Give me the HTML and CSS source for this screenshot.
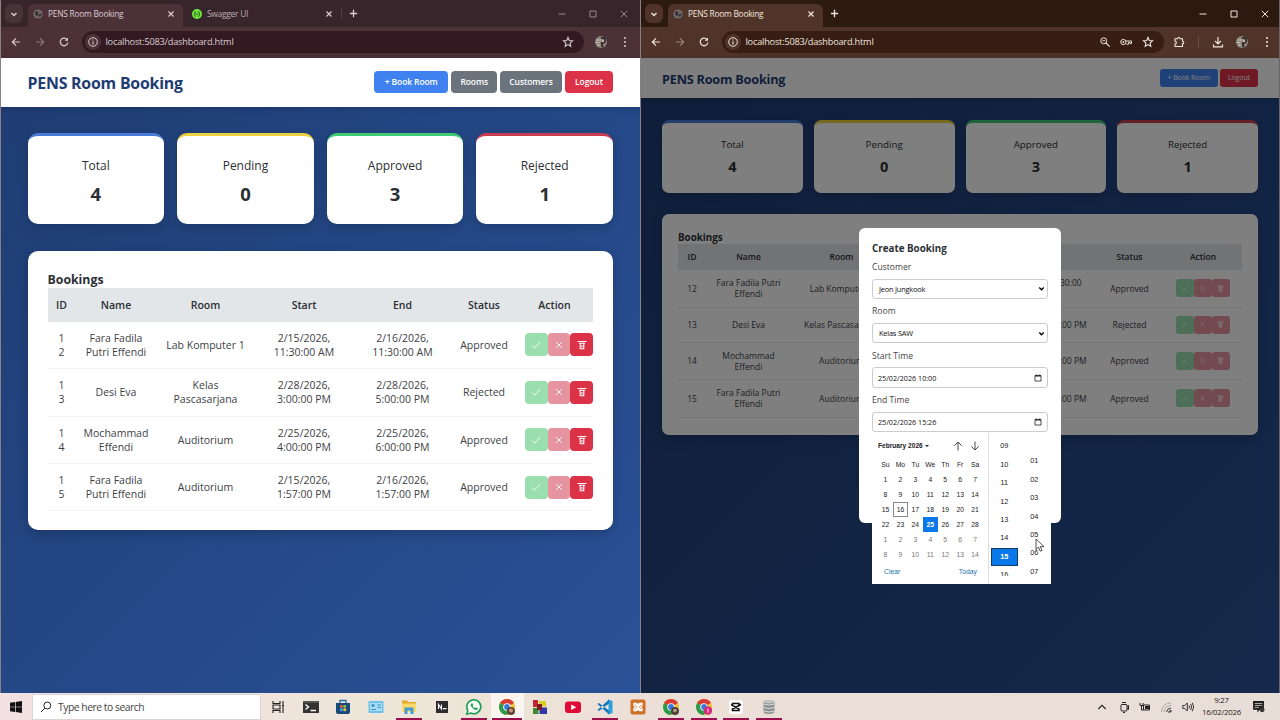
FILE: index.html
```html
<!DOCTYPE html>
<html lang="en">
<head>
<meta charset="UTF-8">
<meta name="viewport" content="width=device-width, initial-scale=1.0">
<title>PENS Room Booking</title>
<link rel="stylesheet" href="styles.css">
</head>
<body>

<!-- shared icons -->
<svg class="sprite" width="0" height="0">
  <symbol id="chevron" viewBox="0 0 10 10"><path d="M2.5 4l2.5 2.5L7.500 4" fill="none" stroke="currentColor" stroke-width="1.5"/></symbol>
  <symbol id="globe" viewBox="0 0 10 10"><circle cx="5" cy="5" r="4.600" fill="#6f6a6d"/><path d="M2 3.500l2-1.500 1.500 1-1 1.500 1 1-1 2-2-2zM6 5l2.500-.5-.5 2-2 1.500z" fill="#332a2e"/></symbol>
  <symbol id="close" viewBox="0 0 10 10"><path d="M2.500 2.500l5 5M7.500 2.500l-5 5" stroke="currentColor" stroke-width="1.2"/></symbol>
  <symbol id="plus" viewBox="0 0 10 10"><path d="M5 1.700v6.600M1.700 5h6.600" stroke="currentColor" stroke-width="1.200"/></symbol>
  <symbol id="back" viewBox="0 0 12 12"><path d="M10 6H2.500M6 2.300L2.300 6 6 9.700" fill="none" stroke="currentColor" stroke-width="1.200"/></symbol>
  <symbol id="forward" viewBox="0 0 12 12"><path d="M2 6h7.500M6 2.300L9.700 6 6 9.700" fill="none" stroke="currentColor" stroke-width="1.200"/></symbol>
  <symbol id="reload" viewBox="0 0 12 12"><path d="M9.300 4A3.800 3.800 0 1 0 9.800 6.500" fill="none" stroke="currentColor" stroke-width="1.200"/><path d="M10 1.500v3.300H6.700z" fill="currentColor"/></symbol>
  <symbol id="info" viewBox="0 0 12 12"><circle cx="6" cy="6" r="4.300" fill="none" stroke="currentColor"/><path d="M6 5.400v3M6 3.500v1.100" stroke="currentColor" stroke-width="1.100"/></symbol>
  <symbol id="star" viewBox="0 0 12 12"><path d="M6 1.500l1.300 3 3.200.3L8.100 7l.7 3.300L6 8.600 3.200 10.300 3.900 7 1.500 4.800l3.200-.3z" fill="none" stroke="currentColor" stroke-width="1.100"/></symbol>
  <symbol id="dots" viewBox="0 0 12 12"><g fill="currentColor"><circle cx="6" cy="1.900" r="1"/><circle cx="6" cy="6" r="1"/><circle cx="6" cy="10.100" r="1"/></g></symbol>
  <symbol id="avatar" viewBox="0 0 12 12"><circle cx="6" cy="6" r="6" fill="#8d857c"/><path d="M1 4h5M.5 6.500h4M2 9h4" stroke="#c9c2b4" stroke-width="1"/><path d="M6 2q4-1 4 2t-3 3q-1 2 1 4" fill="none" stroke="#332b29" stroke-width="2"/><circle cx="8" cy="5" r="1.200" fill="#cfb9a4"/></symbol>
  <symbol id="min" viewBox="0 0 10 10"><path d="M1.500 5h7" stroke="currentColor"/></symbol>
  <symbol id="max" viewBox="0 0 10 10"><path d="M2 2h6v6H2z" fill="none" stroke="currentColor"/></symbol>
  <symbol id="quit" viewBox="0 0 10 10"><path d="M1.800 1.800l6.400 6.400M8.200 1.800L1.800 8.200" stroke="currentColor"/></symbol>
  <symbol id="check" viewBox="0 0 10 10"><path d="M1 5.500l2.600 2.600L9 2.200" fill="none" stroke="currentColor" stroke-width=".9"/></symbol>
  <symbol id="cross" viewBox="0 0 10 10"><path d="M2 2l6 6M8 2L2 8" stroke="currentColor" stroke-width=".9"/></symbol>
  <symbol id="trash" viewBox="0 0 10 10"><path d="M.5 1.500h9M2 3.300h6M3.200 3.500v5.300h3.600V3.500M5 5v2.500" fill="none" stroke="currentColor" stroke-width="1.100"/></symbol>
  <symbol id="date" viewBox="0 0 8 8"><path d="M1 1.500h6V7H1z" fill="none" stroke="#222" stroke-width=".8"/><path d="M1 2h6M2.300.5v1M5.700.5v1" stroke="#222" stroke-width="1.100"/></symbol>
  <symbol id="chrome" viewBox="0 0 16 16"><circle cx="8" cy="8" r="8" fill="#f2c230"/><path d="M8 8L1.100 4A8 8 0 0 1 14.900 4z" fill="#d93a31"/><path d="M8 8L1.100 4A8 8 0 0 0 8 16l3.300-6z" fill="#2c9a4b"/><circle cx="8" cy="8" r="3.800" fill="#fff"/><circle cx="8" cy="8" r="2.900" fill="#3b78dc"/></symbol>
</svg>

<div class="desktop">
  <div class="windows">

    <!-- left browser -->
    <section class="browser browser-left">
      <div class="tabstrip">
        <span class="tab-menu"><svg><use href="#chevron"/></svg></span>
        <div class="tab active">
          <svg class="favicon"><use href="#globe"/></svg>
          <span class="tab-title">PENS Room Booking</span>
          <svg class="tab-close"><use href="#close"/></svg>
        </div>
        <div class="tab">
          <svg class="favicon" viewBox="0 0 10 10"><circle cx="5" cy="5" r="5" fill="#6ee63c"/><path d="M3.800 2.500q-1 0-1 1.200T2 5q.8.200.8 1.300t1 1.200M6.200 2.500q1 0 1 1.200T8 5q-.8.200-.8 1.300t-1 1.200M3.700 5h2.600" fill="none" stroke="#1d4a16" stroke-width=".9"/></svg>
          <span class="tab-title">Swagger UI</span>
          <svg class="tab-close"><use href="#close"/></svg>
        </div>
        <span class="tab-sep"></span>
        <svg class="new-tab"><use href="#plus"/></svg>
        <div class="controls">
          <svg><use href="#min"/></svg>
          <svg><use href="#max"/></svg>
          <svg><use href="#quit"/></svg>
        </div>
      </div>
      <div class="toolbar">
        <svg><use href="#back"/></svg>
        <svg class="dim"><use href="#forward"/></svg>
        <svg><use href="#reload"/></svg>
        <div class="urlbar">
          <span class="site-info"><svg><use href="#info"/></svg></span>
          <span class="url">localhost:5083/dashboard.html</span>
          <div class="url-icons"><svg><use href="#star"/></svg></div>
        </div>
        <div class="extras">
          <svg><use href="#avatar"/></svg>
          <svg><use href="#dots"/></svg>
        </div>
      </div>

      <main class="page">
        <header class="header">
          <h1>PENS Room Booking</h1>
          <nav>
            <span class="btn blue">+ Book Room</span>
            <span class="btn gray">Rooms</span>
            <span class="btn gray">Customers</span>
            <span class="btn red">Logout</span>
          </nav>
        </header>
        <div class="stats">
          <div class="stat total"><p>Total</p><b>4</b></div>
          <div class="stat pending"><p>Pending</p><b>0</b></div>
          <div class="stat approved"><p>Approved</p><b>3</b></div>
          <div class="stat rejected"><p>Rejected</p><b>1</b></div>
        </div>
        <div class="bookings">
          <h2>Bookings</h2>
          <table>
            <colgroup><col class="c-id"><col class="c-name"><col class="c-room"><col class="c-start"><col class="c-end"><col class="c-status"><col class="c-action"></colgroup>
            <thead>
              <tr><th>ID</th><th>Name</th><th>Room</th><th>Start</th><th>End</th><th>Status</th><th>Action</th></tr>
            </thead>
            <tbody>
              <tr>
                <td>1<br>2</td><td>Fara Fadila<br>Putri Effendi</td><td>Lab Komputer 1</td><td>2/15/2026,<br>11:30:00 AM</td><td>2/16/2026,<br>11:30:00 AM</td><td>Approved</td>
                <td><div class="actions"><span class="ok"><svg><use href="#check"/></svg></span><span class="no"><svg><use href="#cross"/></svg></span><span class="del"><svg><use href="#trash"/></svg></span></div></td>
              </tr>
              <tr>
                <td>1<br>3</td><td>Desi Eva</td><td>Kelas<br>Pascasarjana</td><td>2/28/2026,<br>3:00:00 PM</td><td>2/28/2026,<br>5:00:00 PM</td><td>Rejected</td>
                <td><div class="actions"><span class="ok"><svg><use href="#check"/></svg></span><span class="no"><svg><use href="#cross"/></svg></span><span class="del"><svg><use href="#trash"/></svg></span></div></td>
              </tr>
              <tr>
                <td>1<br>4</td><td>Mochammad<br>Effendi</td><td>Auditorium</td><td>2/25/2026,<br>4:00:00 PM</td><td>2/25/2026,<br>6:00:00 PM</td><td>Approved</td>
                <td><div class="actions"><span class="ok"><svg><use href="#check"/></svg></span><span class="no"><svg><use href="#cross"/></svg></span><span class="del"><svg><use href="#trash"/></svg></span></div></td>
              </tr>
              <tr>
                <td>1<br>5</td><td>Fara Fadila<br>Putri Effendi</td><td>Auditorium</td><td>2/15/2026,<br>1:57:00 PM</td><td>2/16/2026,<br>1:57:00 PM</td><td>Approved</td>
                <td><div class="actions"><span class="ok"><svg><use href="#check"/></svg></span><span class="no"><svg><use href="#cross"/></svg></span><span class="del"><svg><use href="#trash"/></svg></span></div></td>
              </tr>
            </tbody>
          </table>
        </div>
      </main>
    </section>

    <!-- right browser -->
    <section class="browser browser-right">
      <div class="tabstrip">
        <span class="tab-menu"><svg><use href="#chevron"/></svg></span>
        <div class="tab active">
          <svg class="favicon"><use href="#globe"/></svg>
          <span class="tab-title">PENS Room Booking</span>
          <svg class="tab-close"><use href="#close"/></svg>
        </div>
        <svg class="new-tab"><use href="#plus"/></svg>
        <div class="controls">
          <svg><use href="#min"/></svg>
          <svg><use href="#max"/></svg>
          <svg><use href="#quit"/></svg>
        </div>
      </div>
      <div class="toolbar">
        <svg><use href="#back"/></svg>
        <svg class="dim"><use href="#forward"/></svg>
        <svg><use href="#reload"/></svg>
        <div class="urlbar">
          <span class="site-info"><svg><use href="#info"/></svg></span>
          <span class="url">localhost:5083/dashboard.html</span>
          <div class="url-icons">
            <svg viewBox="0 0 12 12"><circle cx="4.800" cy="4.800" r="3" fill="none" stroke="currentColor"/><path d="M7 7l3.700 3.700M3.500 4.800h2.600" stroke="currentColor" stroke-width="1.100"/></svg>
            <svg viewBox="0 0 12 12"><circle cx="3.300" cy="6" r="2.600" fill="none" stroke="currentColor"/><circle cx="3.300" cy="6" r=".9" fill="currentColor"/><path d="M6 5h5.500v2.500H10V6.500H8.500v1.700H6.300" fill="none" stroke="currentColor"/></svg>
            <svg><use href="#star"/></svg>
          </div>
        </div>
        <div class="extras">
          <svg viewBox="0 0 12 12"><path d="M2 2.800h2.500a1.300 1.300 0 0 1 2.600 0h2.400v2.500a1.300 1.300 0 0 1 0 2.600v2.600H2V8a1.300 1.300 0 0 0 0-2.700z" fill="none" stroke="currentColor" stroke-width="1.100"/></svg>
          <span class="extras-sep"></span>
          <svg viewBox="0 0 12 12"><path d="M6 1v6.500M3 4.800l3 3 3-3M1.500 8.500v2.300h9V8.500" fill="none" stroke="currentColor" stroke-width="1.200"/></svg>
          <svg><use href="#avatar"/></svg>
          <svg><use href="#dots"/></svg>
        </div>
      </div>

      <main class="page">
        <header class="header">
          <h1>PENS Room Booking</h1>
          <nav>
            <span class="btn blue">+ Book Room</span>
            <span class="btn red">Logout</span>
          </nav>
        </header>
        <div class="stats">
          <div class="stat total"><p>Total</p><b>4</b></div>
          <div class="stat pending"><p>Pending</p><b>0</b></div>
          <div class="stat approved"><p>Approved</p><b>3</b></div>
          <div class="stat rejected"><p>Rejected</p><b>1</b></div>
        </div>
        <div class="bookings">
          <h2>Bookings</h2>
          <table>
            <colgroup><col class="c-id"><col class="c-name"><col class="c-room"><col class="c-start"><col class="c-end"><col class="c-status"><col class="c-action"></colgroup>
            <thead>
              <tr><th>ID</th><th>Name</th><th>Room</th><th></th><th></th><th>Status</th><th>Action</th></tr>
            </thead>
            <tbody>
              <tr>
                <td>12</td><td>Fara Fadila Putri<br>Effendi</td><td>Lab Komputer 1</td><td></td><td>2/16/2026, 11:30:00<br>AM</td><td>Approved</td>
                <td><div class="actions"><span class="ok"><svg><use href="#check"/></svg></span><span class="no"><svg><use href="#cross"/></svg></span><span class="del"><svg><use href="#trash"/></svg></span></div></td>
              </tr>
              <tr class="short">
                <td>13</td><td>Desi Eva</td><td>Kelas Pascasarjana</td><td></td><td>2/28/2026, 5:00:00 PM</td><td>Rejected</td>
                <td><div class="actions"><span class="ok"><svg><use href="#check"/></svg></span><span class="no"><svg><use href="#cross"/></svg></span><span class="del"><svg><use href="#trash"/></svg></span></div></td>
              </tr>
              <tr>
                <td>14</td><td>Mochammad<br>Effendi</td><td>Auditorium</td><td></td><td>2/25/2026, 6:00:00 PM</td><td>Approved</td>
                <td><div class="actions"><span class="ok"><svg><use href="#check"/></svg></span><span class="no"><svg><use href="#cross"/></svg></span><span class="del"><svg><use href="#trash"/></svg></span></div></td>
              </tr>
              <tr>
                <td>15</td><td>Fara Fadila Putri<br>Effendi</td><td>Auditorium</td><td></td><td>2/16/2026, 1:57:00 PM</td><td>Approved</td>
                <td><div class="actions"><span class="ok"><svg><use href="#check"/></svg></span><span class="no"><svg><use href="#cross"/></svg></span><span class="del"><svg><use href="#trash"/></svg></span></div></td>
              </tr>
            </tbody>
          </table>
        </div>

        <div class="overlay"></div>
        <div class="modal">
          <h3>Create Booking</h3>
          <label>Customer</label>
          <div class="field select"><span>Jeon Jungkook</span><svg><use href="#chevron"/></svg></div>
          <label>Room</label>
          <div class="field select"><span>Kelas SAW</span><svg><use href="#chevron"/></svg></div>
          <label>Start Time</label>
          <div class="field"><span>25/02/2026 10:00</span><svg><use href="#date"/></svg></div>
          <label>End Time</label>
          <div class="field"><span>25/02/2026 15:26</span><svg><use href="#date"/></svg></div>

          <div class="picker">
            <div class="calendar">
              <div class="cal-head">
                <b>February 2026</b><i class="caret"></i>
                <svg viewBox="0 0 10 10"><path d="M5 9.500V1M1.300 4.700L5 1l3.700 3.700" fill="none" stroke="#333" stroke-width=".9"/></svg>
                <svg viewBox="0 0 10 10"><path d="M5 .5V9M1.300 5.300L5 9l3.700-3.700" fill="none" stroke="#333" stroke-width=".9"/></svg>
              </div>
              <div class="days">
                <span>Su</span><span>Mo</span><span>Tu</span><span>We</span><span>Th</span><span>Fr</span><span>Sa</span>
                <span>1</span><span>2</span><span>3</span><span>4</span><span>5</span><span>6</span><span>7</span>
                <span>8</span><span>9</span><span>10</span><span>11</span><span>12</span><span>13</span><span>14</span>
                <span>15</span><span class="today">16</span><span>17</span><span>18</span><span>19</span><span>20</span><span>21</span>
                <span>22</span><span>23</span><span>24</span><span class="selected">25</span><span>26</span><span>27</span><span>28</span>
                <span class="next">1</span><span class="next">2</span><span class="next">3</span><span class="next">4</span><span class="next">5</span><span class="next">6</span><span class="next">7</span>
                <span class="next">8</span><span class="next">9</span><span class="next">10</span><span class="next">11</span><span class="next">12</span><span class="next">13</span><span class="next">14</span>
              </div>
              <div class="cal-foot"><span>Clear</span><span>Today</span></div>
            </div>
            <div class="times hours">
              <span>09</span><span>10</span><span>11</span><span>12</span><span>13</span><span>14</span><span class="selected">15</span><span>16</span>
            </div>
            <div class="times minutes">
              <span>01</span><span>02</span><span>03</span><span>04</span><span>05</span><span>06</span><span>07</span>
            </div>
          </div>
          <svg class="cursor" viewBox="0 0 10 15"><path d="M1 1v10.500l2.500-2.300 1.700 4 1.800-.8-1.700-3.800H9z" fill="#fff" stroke="#222" stroke-width=".8"/></svg>
        </div>
      </main>
    </section>
  </div>

  <!-- taskbar -->
  <footer class="taskbar">
    <span class="start"><svg viewBox="0 0 12 12"><path d="M0 1.700l5-.7v4.700H0zM5.700.9L12 0v5.700H5.700zM0 6.300h5V11l-5-.7zM5.700 6.300H12V12l-6.300-.9z" fill="#111"/></svg></span>
    <div class="search">
      <svg viewBox="0 0 12 12"><circle cx="7.300" cy="4.500" r="3.500" fill="none" stroke="#222"/><path d="M4.800 7.200L1 11" stroke="#222"/></svg>
      <span>Type here to search</span>
    </div>
    <div class="apps">
      <span><svg viewBox="0 0 16 16"><path d="M3 2v2.500h7V2M3 14v-2.500h7V14M3 6h7v4H3zM13 2v3M13 8v6" fill="none" stroke="#222" stroke-width="1.100"/><path d="M12 5.500h2v2h-2z" fill="#222"/></svg></span>
      <span><svg viewBox="0 0 16 16"><path d="M0 2h16v12H0z" fill="#333"/><path d="M0 2h16v2H0z" fill="#555"/><path d="M2.500 5.500L5.500 8l-3 2.500M7.500 11.500H13" fill="none" stroke="#fff" stroke-width="1.400"/></svg></span>
      <span><svg viewBox="0 0 16 16"><path d="M5 4V1.500h6V4" fill="none" stroke="#1a6fae" stroke-width="1.300"/><path d="M1 4h14v9q0 2-2 2H3q-2 0-2-2z" fill="#174a7c"/><path d="M5 6h2.700v2.700H5z" fill="#e85b39"/><path d="M8.400 6h2.700v2.700H8.400z" fill="#83c341"/><path d="M5 9.400h2.700v2.700H5z" fill="#39a5e8"/><path d="M8.400 9.400h2.700v2.700H8.400z" fill="#fbc22d"/></svg></span>
      <span><svg viewBox="0 0 16 16"><rect x=".5" y="2" width="15" height="12" rx="1" fill="#6cc1e8"/><path d="M2 4h12v8H2z" fill="#a6def5"/><circle cx="5" cy="6.500" r="1.600" fill="#3d8fc4"/><path d="M3 10.500h5M9.500 6H13M9.500 8.500H13" stroke="#3d8fc4"/></svg></span>
      <span class="open"><svg viewBox="0 0 16 16"><path d="M1 1.500h5l1 1.500h8v10H1z" fill="#e2a92b"/><path d="M1 4.500h14V13H1z" fill="#fbd968"/><path d="M3.500 15V8.500h9V15h-3v-3.500h-3V15z" fill="#3f9bd4"/></svg></span>
      <span><svg viewBox="0 0 16 16"><path d="M2 2h12v12H2z" fill="#2b2b2d"/><path d="M4.500 10V5.500l3 4.500V5.500M9 9.700h3.500" fill="none" stroke="#fff" stroke-width="1.200"/></svg></span>
      <span class="open"><svg viewBox="0 0 16 16"><path d="M.8 15.200l1-3.800A7 7 0 1 1 4.600 14z" fill="#f5fff5" stroke="#1f9c55" stroke-width="1.600"/><path d="M5.300 4.500q-1.500 1.500.7 4t5 2.500l.8-1.800-1.800-1-1 1Q7 8.500 6.500 7l.7-.9-.7-1.700z" fill="#1f9c55"/></svg></span>
      <span class="open current"><svg viewBox="0 0 16 16"><use href="#chrome"/><circle cx="12" cy="12" r="4" fill="#5b4436"/><circle cx="12" cy="11.500" r="2" fill="#c69a7b"/></svg></span>
      <span><svg viewBox="0 0 16 16"><path d="M1 1h5v7H1z" fill="#c52330"/><path d="M7 2h7v5.500H7z" fill="#d9cd26"/><path d="M1 9h5.500v6H1z" fill="#3a8b33"/><path d="M7.500 8.500H15V15H7.500z" fill="#3135a8"/><path d="M5 5h5v6H5z" fill="#7d1d20"/></svg></span>
      <span><svg viewBox="0 0 16 16"><rect y="2.500" width="16" height="11.500" rx="3" fill="#e00b35"/><path d="M6.200 5.500l5 2.700-5 2.800z" fill="#fff"/></svg></span>
      <span class="open"><svg viewBox="0 0 16 16"><path d="M11.500.5L15.500 2v12l-4 1.500z" fill="#2aa0e0"/><path d="M.5 5L2 4l10 7.500v4zM.5 11L2 12l10-7.500V.5z" fill="#1577b9"/></svg></span>
      <span><svg viewBox="0 0 16 16"><rect x=".5" y=".5" width="15" height="15" rx="2" fill="#cf7027"/><path d="M4.500 4l7 8M11.500 4l-7 8M4 4.500h2.500L8 6l1.500-1.500H12v2L10.500 8l1.500 1.500v2H9.500L8 10l-1.500 1.500H4v-2L5.500 8 4 6.500z" fill="none" stroke="#fff" stroke-width="1.300"/></svg></span>
      <span class="open"><svg viewBox="0 0 16 16"><use href="#chrome"/><circle cx="12" cy="12" r="4" fill="#4b443c"/><circle cx="12" cy="11.500" r="1.800" fill="#b5a389"/></svg></span>
      <span class="open"><svg viewBox="0 0 16 16"><use href="#chrome"/><circle cx="12" cy="11.500" r="4.300" fill="#d62a78"/><path d="M12 9.500v4" stroke="#fff" stroke-width=".9"/></svg></span>
      <span class="open"><svg viewBox="0 0 16 16"><rect x="1" y="1" width="14" height="14" rx="2.500" fill="#fff"/><path d="M13 5.500L4.500 10v1.500H11V10L3 5.700M4.500 6.500V4.500H11V6" fill="none" stroke="#111" stroke-width="1.500"/></svg></span>
      <span class="open"><svg viewBox="0 0 16 16"><path d="M2.500 2.500q5.500-3 11 0v11q-5.500 3-11 0z" fill="#8d8f90"/><path d="M2.500 5q5.500 2 11 0M2.500 8.500q5.500 2 11 0M2.500 12q5.500 2 11 0" fill="none" stroke="#dcdddd"/><ellipse cx="8" cy="2.700" rx="5.500" ry="1.700" fill="#c2c4c5"/></svg></span>
    </div>
    <div class="tray">
      <svg viewBox="0 0 12 12"><path d="M2.300 8L6 4.300 9.700 8" fill="none" stroke="#222" stroke-width="1.100"/></svg>
      <svg viewBox="0 0 12 12"><rect x="3" y="3.500" width="6" height="6.500" rx="1" fill="none" stroke="#222"/><path d="M4 1.500h4M9 5.500l1.500-1v4L9 7.500M5 11.500h2" fill="none" stroke="#222"/></svg>
      <svg viewBox="0 0 12 12"><path d="M4.500 4h6v5h-6z" fill="none" stroke="#222"/><path d="M6 5h4v3H6z" fill="#222"/><path d="M1 2v2.500h3V2M2.500 4v5h2" fill="none" stroke="#222"/></svg>
      <svg viewBox="0 0 12 12"><path d="M1.500 11A9 9 0 0 1 11 2M4 11a7 7 0 0 1 7-6.500" fill="none" stroke="#aaa3a0"/><path d="M6.500 11A5 5 0 0 1 11 7M8.500 11l2.500-2v2z" fill="none" stroke="#333"/></svg>
      <svg viewBox="0 0 12 12"><path d="M.8 4.500h2L5.300 2v8L2.800 7.500h-2zM7 4.500q1 1.500 0 3M8.700 3q2 3 0 6M10.300 1.800q2.700 4.200 0 8.400" fill="none" stroke="#222" stroke-width=".9"/></svg>
    </div>
    <div class="clock"><span>9:27</span><span>16/02/2026</span></div>
    <svg class="notify" viewBox="0 0 12 12"><path d="M1 1h10v8H7l-2 2.500V9H1z" fill="#1b1b1b"/><path d="M2.500 3.200h7M2.500 5h7M2.500 6.800h4" stroke="#e8dfdb" stroke-width=".7"/><circle cx="9.300" cy="9" r="2.300" fill="#3a3635"/></svg>
  </footer>
</div>

</body>
</html>
```
FILE: styles.css
```css
* {
  box-sizing: border-box;
  margin: 0;
  padding: 0;
}
body {
  width: 1280px;
  height: 720px;
  overflow: hidden;
  font-family: "Open Sans", "Noto Sans", sans-serif;
  color: #2b2f33;
}
.sprite {
  position: absolute;
}
.desktop {
  display: flex;
  flex-direction: column;
  height: 720px;
}
.windows {
  display: grid;
  grid-template-columns: 640px 640px;
  height: 693px;
}

/* browser chrome */
.browser {
  display: flex;
  flex-direction: column;
  overflow: hidden;
  border-left: 1px solid #8a8084;
}
.browser-left {
  --strip: #38252c;
  --bar: #4d3138;
  --url: #331a22;
  --text: #d9ccd0;
}
.browser-right {
  --strip: #2c190f;
  --bar: #503429;
  --url: #371d14;
  --text: #efe4de;
  border-right: 1px solid #6a6468;
}
.tabstrip {
  display: flex;
  align-items: center;
  height: 27px;
  background: var(--strip);
  color: var(--text);
}
.tab-menu {
  width: 18px;
  height: 19px;
  margin: 0 5px 0 4px;
  border-radius: 6px;
  background: var(--bar);
  display: flex;
  align-items: center;
  justify-content: center;
}
.browser-left .tab-menu {
  background: #453539;
}
.tab-menu svg,
.favicon,
.tab-close {
  width: 10px;
  height: 10px;
}
.tab {
  display: flex;
  align-items: center;
  width: 155px;
  height: 23px;
  margin-top: 4px;
  padding: 0 7px 4px 5px;
  border-radius: 6px 6px 0 0;
  font-size: 8.4px;
  letter-spacing: -.25px;
}
.tab.active {
  background: var(--bar);
}
.tab:not(.active) {
  padding-left: 9px;
  width: 158px;
}
.tab:not(.active) .tab-title {
  opacity: .8;
}
.tab-title {
  flex: 1;
  margin-left: 5px;
  white-space: nowrap;
}
.tab-sep {
  width: 1px;
  height: 10px;
  background: #54404a;
}
.new-tab {
  width: 11px;
  height: 11px;
  margin-left: 6px;
}
.controls {
  display: flex;
  gap: 21px;
  margin-left: auto;
  margin-right: 11px;
}
.browser-left .controls {
  opacity: .6;
}
.browser-right .controls {
  margin-right: 9.500px;
}
.controls svg {
  width: 10px;
  height: 10px;
}
.toolbar {
  display: flex;
  align-items: center;
  height: 31px;
  padding: 0 0 2px 8.500px;
  background: var(--bar);
  color: var(--text);
}
.toolbar svg {
  width: 12px;
  height: 12px;
  margin-right: 12px;
  flex: none;
}
.toolbar svg.dim {
  opacity: .45;
}
.urlbar {
  display: flex;
  flex: none;
  align-items: center;
  width: 502px;
  height: 22px;
  padding-left: 3px;
  border-radius: 11px;
  background: var(--url);
}
.browser-right .urlbar {
  width: 442px;
}
.site-info {
  display: flex;
  align-items: center;
  justify-content: center;
  width: 16px;
  height: 16px;
  border-radius: 50%;
  background: var(--bar);
}
.site-info svg {
  margin: 0;
}
.url {
  margin-left: 5px;
  font-size: 9.200px;
  letter-spacing: -.2px;
}
.url-icons {
  display: flex;
  gap: 9.500px;
  margin-left: auto;
  padding-right: 10px;
}
.url-icons svg {
  margin: 0;
}
.extras {
  display: flex;
  align-items: center;
  gap: 12.500px;
  margin-left: auto;
  padding-right: 9px;
}
.browser-right .extras {
  gap: 12.700px;
  padding-right: 6px;
}
.extras svg {
  margin: 0;
}
.extras-sep {
  width: 1px;
  height: 12px;
  background: #6d4f43;
}

/* dashboard */
.page {
  position: relative;
  flex: 1;
  background: linear-gradient(135deg, #1e3c72, #2a5298);
}
.header {
  display: flex;
  align-items: center;
  justify-content: space-between;
  height: 48.500px;
  padding: 0 27px 0 26.500px;
  background: #fff;
  box-shadow: 0 1px 6px rgba(0, 0, 0, .2);
}
.header h1 {
  padding-top: 2px;
  font-size: 15.900px;
  letter-spacing: -.22px;
  color: #1e3c72;
}
.header nav {
  display: flex;
  gap: 3.300px;
}
.btn {
  height: 22px;
  line-height: 22px;
  padding: 0 9px;
  border-radius: 4px;
  color: #fff;
  font-size: 8.500px;
  font-weight: 600;
  letter-spacing: -.1px;
  white-space: nowrap;
  text-align: center;
}
.blue { background: #3f82ef; }
.gray { background: #6b747d; }
.red { background: #dc3248; }
.browser-left .blue { width: 74px; }
.browser-left .red { width: 48px; }

.stats {
  display: grid;
  grid-template-columns: repeat(4, 1fr);
  gap: 13px;
  padding: 26.500px 27px 0 26.500px;
}
.stat {
  height: 91px;
  padding-top: 18px;
  text-align: center;
  background: #fff;
  border-top: 3px solid;
  border-radius: 10px;
  box-shadow: 0 4px 10px rgba(0, 0, 0, .15);
}
.stat p {
  font-size: 12px;
  font-weight: 500;
  line-height: 24px;
  color: #2b2f33;
}
.stat b {
  display: block;
  font-size: 18.500px;
  line-height: 31px;
  color: #2b2f33;
}
.total { border-color: #4a7bd6; }
.pending { border-color: #ecd03f; }
.approved { border-color: #3fcb74; }
.rejected { border-color: #c83e50; }

.bookings {
  height: 279px;
  margin: 27px 27px 0 26.500px;
  padding: 20px;
  background: #fff;
  border-radius: 10px;
  box-shadow: 0 4px 12px rgba(0, 0, 0, .2);
}
.bookings h2 {
  font-size: 12.300px;
  height: 17px;
  line-height: 18px;
}
table {
  width: 545px;
  table-layout: fixed;
  border-collapse: collapse;
  font-size: 10.500px;
  line-height: 14px;
  text-align: center;
  white-space: nowrap;
}
th {
  height: 33.500px;
  font-weight: 600;
  background: #e2e6e9;
}
td {
  height: 47.300px;
  border-bottom: 1px solid #f1f2f3;
  color: #3d4145;
}
.c-id { width: 28px; }
.c-name { width: 81px; }
.c-room { width: 98px; }
.c-start { width: 99px; }
.c-end { width: 98px; }
.c-status { width: 65px; }
.c-action { width: 76px; }
.actions {
  display: flex;
  margin-left: 8.500px;
}
.actions span {
  display: flex;
  align-items: center;
  justify-content: center;
  flex: none;
  width: 22.700px;
  height: 23px;
  border-radius: 4px;
  color: #fff;
}
.actions svg {
  width: 10px;
  height: 10px;
}
.ok { background: #9bdfae; }
.no { background: #e6949f; }
.del { background: #dc3248; }

/* second window runs at a smaller zoom */
.browser-right .header {
  height: 40px;
  padding: 0 21px;
}
.browser-right .header h1 {
  font-size: 12.700px;
}
.browser-right .btn {
  height: 18px;
  line-height: 18px;
  padding: 0 8px;
  font-size: 7px;
  font-weight: 400;
  border-radius: 3px;
}
.browser-right nav {
  gap: 2px;
}
.browser-right .stats {
  gap: 11px;
  padding: 21.500px 21px 0;
}
.browser-right .stat {
  height: 73px;
  padding-top: 13.500px;
  border-radius: 7px;
}
.browser-right .stat p {
  font-size: 9.800px;
  line-height: 18px;
}
.browser-right .stat b {
  font-size: 14.500px;
  line-height: 26px;
}
.browser-right .bookings {
  height: 220.500px;
  margin: 21.500px 21px 0;
  padding: 15px 16px;
  border-radius: 7px;
}
.browser-right .bookings h2 {
  font-size: 9.800px;
  height: 14.500px;
  line-height: 17px;
}
.browser-right table {
  width: 564px;
  font-size: 8.500px;
  line-height: 11px;
}
.browser-right th {
  height: 26px;
}
.browser-right td {
  height: 37.500px;
  border-color: #e8eaeb;
}
.browser-right .short td {
  height: 35px;
}
.browser-right .c-name { width: 85px; }
.browser-right .c-room { width: 101px; }
.browser-right .c-start { width: 98px; }
.browser-right .c-end { width: 105px; }
.browser-right .c-status { width: 69px; }
.browser-right .c-action { width: 78px; }
.browser-right .actions {
  margin-left: 11.500px;
}
.browser-right .actions span {
  width: 18.200px;
  height: 18px;
  border-radius: 3px;
}
.browser-right .actions svg {
  width: 7px;
  height: 7px;
}
.browser-right .del {
  background: #e6949f;
}

/* modal */
.overlay {
  position: absolute;
  inset: 0;
  background: rgba(0, 0, 0, .5);
}
.modal {
  position: absolute;
  left: 218px;
  top: 170px;
  width: 202px;
  height: 294.500px;
  padding: 12px 13px;
  background: #fff;
  border-radius: 6px;
}
.modal h3 {
  margin-bottom: 1px;
  font-size: 9.800px;
  line-height: 18px;
}
.modal label {
  display: block;
  font-size: 8.600px;
  line-height: 16px;
  margin-bottom: 3.500px;
  color: #444;
}
.field {
  display: flex;
  align-items: center;
  justify-content: space-between;
  height: 20.500px;
  padding: 0 5px;
  margin-bottom: 4.400px;
  border: 1px solid #ccc;
  border-radius: 3px;
  font-size: 7.200px;
  color: #111;
}
.field svg {
  width: 8px;
  height: 8px;
}
.select {
  padding: 0 1px 0 6px;
}
.select span {
  font-size: 7.400px;
  letter-spacing: -.2px;
}
.select svg {
  color: #000;
  width: 9px;
  height: 9px;
}

/* date time picker */
.picker {
  position: absolute;
  left: 13px;
  top: 205px;
  display: flex;
  width: 179px;
  height: 150.500px;
  background: #fff;
  font-family: "Liberation Sans", Arial, sans-serif;
  font-size: 6.800px;
  color: #222;
}
.calendar {
  width: 117px;
  padding: 4.500px 6px 0;
  border-right: 1px solid #ddd;
}
.cal-head {
  display: flex;
  align-items: center;
  height: 16px;
}
.cal-head b {
  font-size: 6.600px;
}
.caret {
  margin: 0 auto 0 2px;
  border: 2px solid transparent;
  border-top-color: #222;
  border-bottom: 0;
}
.cal-head svg {
  width: 10px;
  height: 10px;
  margin-right: 7px;
}
.cal-head svg:last-child {
  margin-right: 2px;
}
.days {
  display: grid;
  grid-template-columns: repeat(7, 14.950px);
  margin-top: 3px;
}
.days span {
  height: 15px;
  line-height: 15px;
  text-align: center;
}
.days .next {
  color: #777;
}
.days .today {
  line-height: 13px;
  border: 1px solid #888;
}
.days .selected,
.hours .selected {
  background: #0a78e8;
  color: #fff;
  font-weight: bold;
}
.cal-foot {
  display: flex;
  justify-content: space-between;
  padding: 6.500px 5px 0 6px;
  color: #1a75a8;
}
.times {
  width: 27.500px;
  height: 142.500px;
  margin-left: 1.500px;
  overflow: hidden;
  text-align: center;
  font-size: 7.300px;
}
.times span {
  display: block;
  height: 18.450px;
  line-height: 18.450px;
}
.hours {
  padding-top: 4.200px;
}
.hours .selected {
  border: 1px solid #123a66;
  line-height: 16.400px;
}
.minutes {
  height: 150px;
  margin-left: 2.500px;
  padding-top: 19.200px;
}
.cursor {
  position: absolute;
  left: 176px;
  top: 310px;
  width: 10px;
  height: 15px;
}

/* taskbar */
.taskbar {
  display: flex;
  align-items: center;
  height: 27px;
  background: linear-gradient(90deg, #f3e0e2, #eee6d8 32%, #ecdfd8 50%, #e9ded7);
  color: #222;
}
.start {
  width: 32px;
  text-align: center;
}
.start svg {
  width: 12px;
  height: 12px;
  vertical-align: middle;
  margin-top: -2px;
}
.search {
  display: flex;
  align-items: center;
  width: 229px;
  height: 26px;
  padding-left: 7px;
  background: #fff;
  border: 1px solid #ddd3d3;
  font-size: 10.300px;
  letter-spacing: -.45px;
  color: #444;
}
.search svg {
  width: 12px;
  height: 12px;
  margin-right: 6px;
}
.apps {
  display: flex;
  height: 27px;
  margin-left: .5px;
}
.apps span {
  display: flex;
  align-items: center;
  justify-content: center;
  width: 32.750px;
  height: 27px;
}
.apps svg {
  width: 16px;
  height: 16px;
}
.apps .open {
  background: linear-gradient(#9a0f4c, #9a0f4c) 50% 100% / 26px 2px no-repeat;
}
.apps .current {
  background: linear-gradient(#9a0f4c, #9a0f4c) 50% 100% / 30px 2px no-repeat, #faf5f1;
}
.tray {
  display: flex;
  gap: 9.300px;
  margin-left: auto;
}
.tray svg {
  width: 12px;
  height: 12px;
}
.clock {
  display: flex;
  flex-direction: column;
  align-items: center;
  width: 56px;
  padding-bottom: 2px;
  font-size: 7.800px;
  letter-spacing: -.25px;
  line-height: 12px;
}
.notify {
  width: 13px;
  height: 13px;
  margin: 0 15.500px 0 2px;
}
```
